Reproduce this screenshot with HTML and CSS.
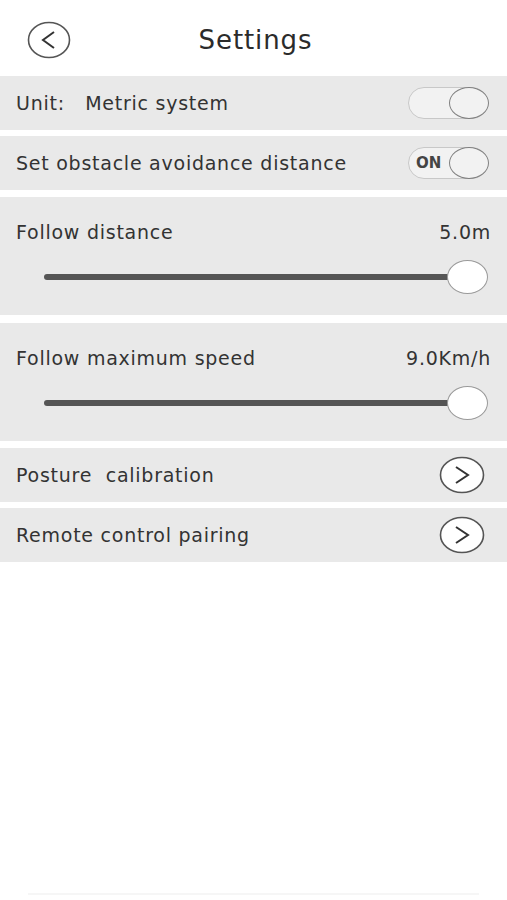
FILE: index.html
```html
<!DOCTYPE html>
<html lang="en">
<head>
    <meta charset="UTF-8">
    <meta name="viewport" content="width=device-width, initial-scale=1.0">
    <title>Settings</title>
    <link rel="stylesheet" href="styles.css">
</head>
<body>

    <header class="top-bar">
        <button type="button" class="circle-btn back-btn" aria-label="Back">
            <svg viewBox="0 0 44 38" width="44" height="38">
                <ellipse cx="22" cy="19" rx="20.5" ry="17.5" fill="none" stroke="#555" stroke-width="1.6"/>
                <path d="M27 11 L16 19 L27 27" fill="none" stroke="#333" stroke-width="2"/>
            </svg>
        </button>
        <h1 class="title">Settings</h1>
    </header>

    <section class="list">
        <div class="row">
            <span class="label">Unit:&nbsp;&nbsp; Metric system</span>
            <span class="switch"><span class="knob"></span></span>
        </div>

        <div class="row">
            <span class="label">Set obstacle avoidance distance</span>
            <span class="switch"><span class="switch-text">ON</span><span class="knob"></span></span>
        </div>

        <div class="row slider-row">
            <div class="slider-head">
                <span class="label">Follow distance</span>
                <span class="value">5.0m</span>
            </div>
            <div class="slider">
                <span class="track"></span>
                <span class="thumb"></span>
            </div>
        </div>

        <div class="row slider-row">
            <div class="slider-head">
                <span class="label">Follow maximum speed</span>
                <span class="value">9.0Km/h</span>
            </div>
            <div class="slider">
                <span class="track"></span>
                <span class="thumb"></span>
            </div>
        </div>

        <div class="row link-row">
            <span class="label">Posture&nbsp; calibration</span>
            <button type="button" class="circle-btn" aria-label="Open">
                <svg viewBox="0 0 46 38" width="46" height="38">
                    <ellipse cx="23" cy="19" rx="21.5" ry="17.5" fill="#fff" stroke="#555" stroke-width="1.6"/>
                    <path d="M17 11 L29 19 L17 27" fill="none" stroke="#333" stroke-width="2"/>
                </svg>
            </button>
        </div>

        <div class="row link-row">
            <span class="label">Remote control pairing</span>
            <button type="button" class="circle-btn" aria-label="Open">
                <svg viewBox="0 0 46 38" width="46" height="38">
                    <ellipse cx="23" cy="19" rx="21.5" ry="17.5" fill="#fff" stroke="#555" stroke-width="1.6"/>
                    <path d="M17 11 L29 19 L17 27" fill="none" stroke="#333" stroke-width="2"/>
                </svg>
            </button>
        </div>
    </section>

    <div class="home-bar"></div>

</body>
</html>
```

FILE: styles.css
```css
body {
    margin: 0;
    width: 507px;
    height: 900px;
    background-color: #fff;
    font-family: "DejaVu Sans", Arial, sans-serif;
    color: #333;
    display: flex;
    flex-direction: column;
}
.top-bar {
    height: 76px;
    box-sizing: border-box;
    padding-top: 3px;
    display: flex;
    align-items: center;
    justify-content: center;
    position: relative;
}
.title {
    margin: 0;
    font-size: 26px;
    font-weight: normal;
    color: #2b2b2b;
    letter-spacing: 0.9px;
    padding-left: 4px;
}
.circle-btn {
    border: none;
    background: none;
    padding: 0;
    display: flex;
    cursor: pointer;
}
.back-btn {
    position: absolute;
    left: 27px;
    top: 21px;
}
.list {
    display: flex;
    flex-direction: column;
    gap: 6px;
}
.row {
    background-color: #e9e9e9;
    height: 54px;
    padding: 0 17px 0 16px;
    display: flex;
    align-items: center;
    justify-content: space-between;
    box-sizing: border-box;
}
.label,
.value {
    font-size: 19px;
    letter-spacing: 0.75px;
}
.switch {
    width: 80px;
    height: 32px;
    border: 1.5px solid #c8c8c8;
    border-radius: 16px;
    background-color: #f2f2f2;
    box-sizing: border-box;
    display: flex;
    align-items: center;
    justify-content: flex-end;
    position: relative;
    margin-right: 2px;
}
.switch-text {
    position: absolute;
    left: 7px;
    font-size: 15px;
    font-weight: bold;
    color: #444;
}
.knob {
    width: 40px;
    height: 32px;
    border: 1.5px solid #808080;
    border-radius: 50%;
    box-sizing: border-box;
    margin-right: -1.5px;
    background-color: #f2f2f2;
}
.slider-row {
    height: 118px;
    flex-direction: column;
    align-items: stretch;
    justify-content: flex-start;
    padding-top: 24px;
    padding-right: 19px;
}
.list .row:nth-child(3),
.list .row:nth-child(5) {
    margin-top: 1px;
}
.list .row:nth-child(4) {
    margin-top: 2px;
}
.slider-head {
    display: flex;
    justify-content: space-between;
    align-items: center;
    margin-right: -3px;
}
.slider {
    margin-top: 17px;
    height: 34px;
    display: flex;
    align-items: center;
    padding-left: 28px;
}
.track {
    flex: 1;
    height: 6px;
    border-radius: 3px;
    background-color: #555;
}
.thumb {
    width: 41px;
    height: 34px;
    border: 1.5px solid #999;
    border-radius: 50%;
    background-color: #fff;
    box-sizing: border-box;
    margin-left: -3px;
}
.link-row {
    padding-right: 22px;
}
.home-bar {
    margin: auto 28px 5px;
    height: 2px;
    background-color: #f6f6f6;
}
```
